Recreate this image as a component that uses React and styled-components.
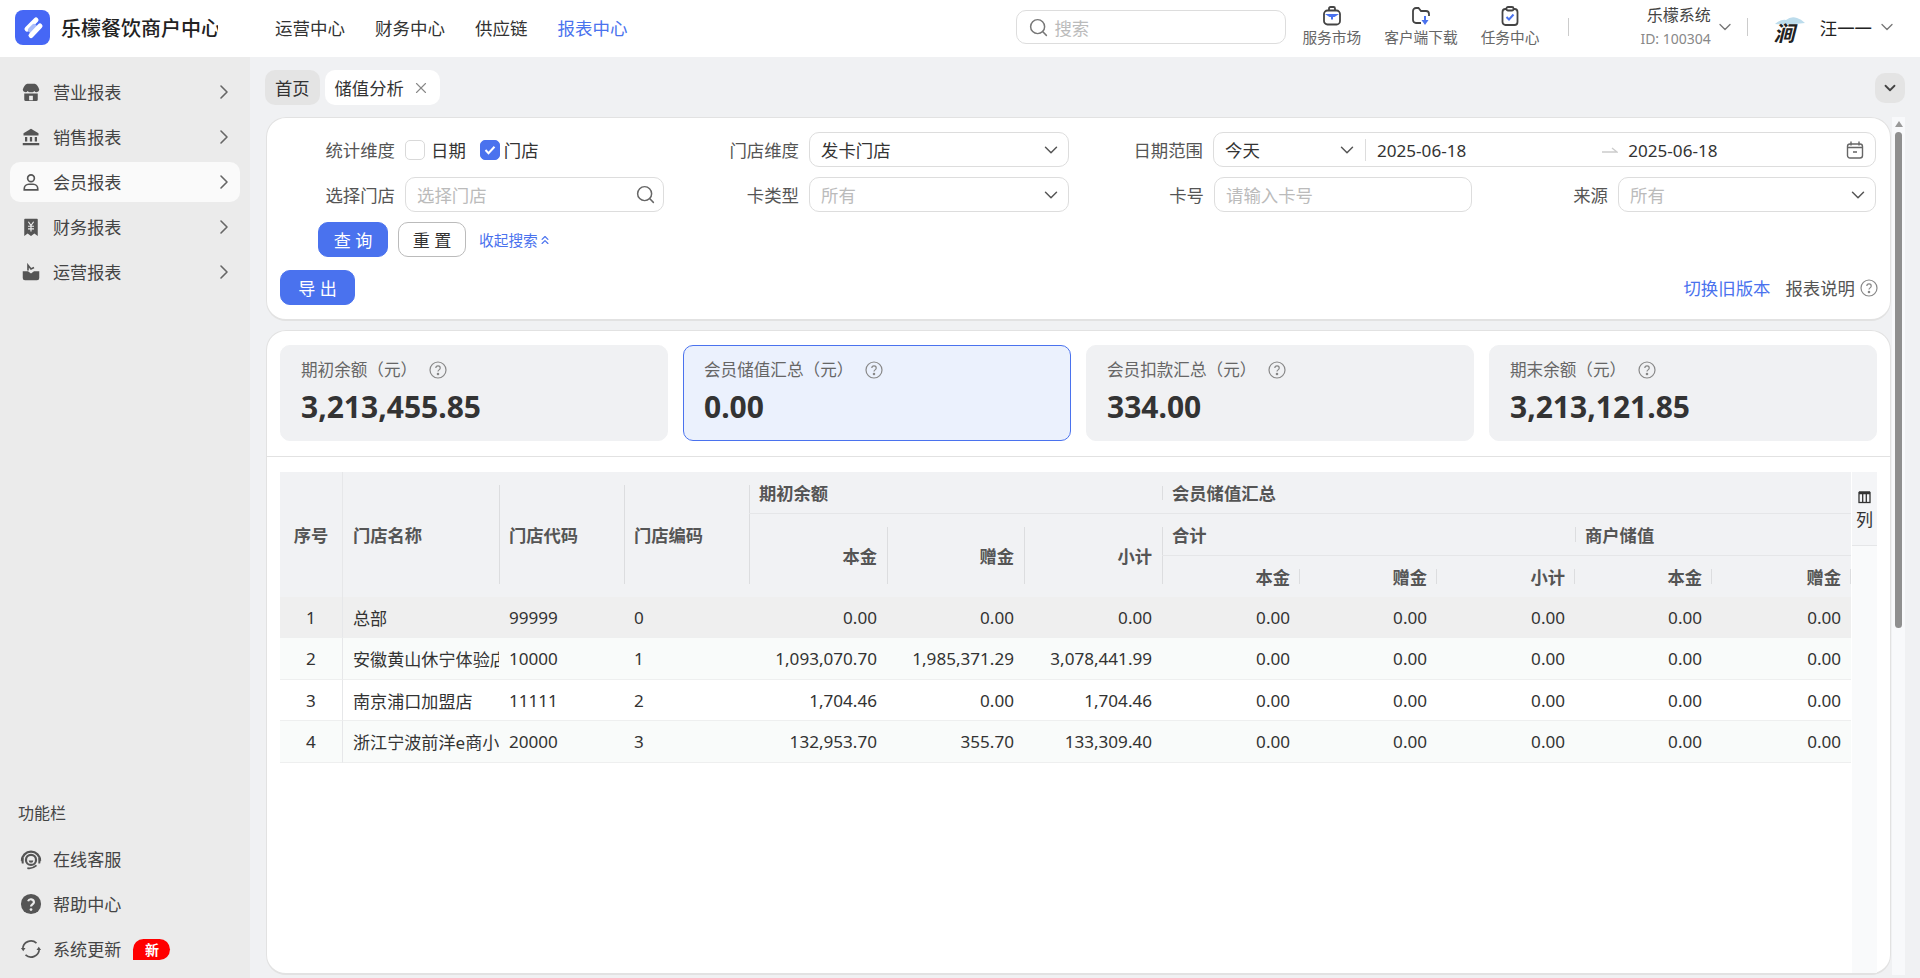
import React from 'react';
import styled, { createGlobalStyle } from 'styled-components';
import { ChevronDown, ChevronRight, ChevronsUp, Search, X } from 'lucide-react';

const BLUE = '#4a72ee';
const FONT = '"Noto Sans", "Noto Sans CJK SC", sans-serif';

const GlobalStyle = createGlobalStyle`
  html, body {
    margin: 0;
    height: 100%;
    overflow: hidden;
    font-family: ${FONT};
    color: #333;
    background: #f0f1f3;
  }
  * { box-sizing: border-box; }
`;

const Shell = styled.div`
  height: 100vh;
  display: flex;
  flex-direction: column;
`;

const TopBar = styled.header`
  height: 57px;
  flex: none;
  display: flex;
  align-items: center;
  padding: 0 23px 3px 15px;
  background: #fff;
`;

const LogoBox = styled.div`
  width: 35px;
  height: 35px;
  flex: none;
  display: flex;
  border-radius: 8px;
  background: #4667f5;
`;

const BrandName = styled.div`
  width: 157px;
  margin-right: 2px;
  margin-left: 11px;
  overflow: hidden;
  white-space: nowrap;
  font-size: 20px;
  font-weight: 500;
  color: #222;
`;

const Nav = styled.nav`
  display: flex;
  gap: 30px;
  margin-left: 55px;
`;

const NavItem = styled.a`
  font-size: 17.5px;
  color: ${p => (p.$active ? BLUE : '#333')};
`;

const SearchBox = styled.div`
  width: 270px;
  height: 34px;
  margin-left: auto;
  display: flex;
  align-items: center;
  gap: 5px;
  padding-left: 11px;
  border: 1px solid #ddd;
  border-radius: 10px;
  font-size: 17.4px;
  color: #bbb;
  svg { color: #777; }
`;

const Tools = styled.div`
  display: flex;
  gap: 23px;
  margin: 0 0 2px 16px;
`;

const Tool = styled.div`
  display: flex;
  flex-direction: column;
  align-items: center;
  gap: 1px;
  font-size: 14.7px;
  line-height: 20px;
  color: #666;
  svg { display: block; }
`;

const BarDivider = styled.span`
  width: 1px;
  height: 18px;
  flex: none;
  margin: ${p => p.$margin};
  background: #ccc;
`;

const Account = styled.div`
  display: flex;
  flex-direction: column;
  align-items: flex-end;
  gap: 4px;
  margin-right: 4px;
`;

const AccountName = styled.div`
  font-size: 16px;
  line-height: 20px;
  color: #444;
`;

const AccountId = styled.div`
  font-size: 14px;
  line-height: 20px;
  color: #888;
`;

const Avatar = styled.div`
  position: relative;
  width: 38px;
  height: 38px;
  flex: none;
  overflow: hidden;
  border-radius: 10px;
  background: #fff;
  svg { position: absolute; left: 0; top: 0; }
`;

const AvatarGlyph = styled.span`
  position: absolute;
  left: 5px;
  top: 14px;
  font-size: 21px;
  line-height: 22px;
  font-weight: 700;
  font-style: italic;
  color: #222;
`;

const UserName = styled.div`
  margin: 0 5px 0 13px;
  font-size: 17.4px;
  color: #222;
`;

const Body = styled.div`
  flex: 1;
  min-height: 0;
  display: flex;
`;

const Sidebar = styled.aside`
  width: 250px;
  flex: none;
  display: flex;
  flex-direction: column;
  justify-content: space-between;
  padding: 15px 10px 9px;
  background: #ebebeb;
`;

const Menu = styled.div`
  display: flex;
  flex-direction: column;
  gap: 5px;
`;

const MenuItem = styled.div`
  height: 40px;
  display: flex;
  align-items: center;
  gap: 13px;
  padding: 0 12px;
  border-radius: 10px;
  font-size: 17.1px;
  color: #444;
  background: ${p => (p.$active ? '#fafafa' : 'transparent')};
  svg { flex: none; }
`;

const MenuText = styled.span`
  margin-top: -2px;
`;

const WideIcon = styled.span`
  display: flex;
  margin: 0 -2px;
`;

const MenuArrow = styled(ChevronRight)`
  margin-left: auto;
  margin-right: -8px;
  color: #666;
`;

const SideTitle = styled.div`
  padding-left: 8px;
  margin-bottom: 6px;
  font-size: 16px;
  line-height: 30px;
  color: #444;
`;

const NewBadge = styled.span`
  margin-left: -1px;
  width: 37px;
  height: 21px;
  display: flex;
  align-items: center;
  justify-content: center;
  border-radius: 11px 11px 11px 0;
  background: #f00;
  font-size: 14px;
  font-weight: 700;
  color: #fff;
`;

const Main = styled.main`
  flex: 1;
  min-width: 0;
  display: flex;
  flex-direction: column;
  padding: 13px 15px 3px 16px;
`;

const TabsRow = styled.div`
  height: 35px;
  flex: none;
  display: flex;
  gap: 5px;
  margin: 0 0 12px -1px;
`;

const Tab = styled.div`
  height: 35px;
  display: flex;
  align-items: center;
  gap: 8px;
  padding: 0 10px;
  border-radius: 10px;
  font-size: 17.3px;
  color: #333;
  background: ${p => (p.$active ? '#fff' : '#e4e4e4')};
  svg { color: #888; }
`;

const CollapseButton = styled.div`
  width: 30px;
  height: 30px;
  margin: 3px 0 0 auto;
  display: flex;
  align-items: center;
  justify-content: center;
  border-radius: 10px;
  background: #e4e4e4;
  color: #444;
`;

const ScrollArea = styled.div`
  flex: 1;
  min-height: 0;
  display: flex;
  gap: 1px;
`;

const Content = styled.div`
  flex: 1;
  min-width: 0;
  display: flex;
  flex-direction: column;
  gap: 9px;
`;

const Scrollbar = styled.div`
  position: relative;
  width: 13px;
  flex: none;
  background: #f8f9fb;
`;

const ScrollArrow = styled.span`
  position: absolute;
  left: 3px;
  top: 4px;
  border-left: 4px solid transparent;
  border-right: 4px solid transparent;
  border-bottom: 6px solid #999;
`;

const ScrollThumb = styled.span`
  position: absolute;
  left: 3px;
  top: 15px;
  width: 7px;
  height: 496px;
  border-radius: 4px;
  background: #8f8f8f;
`;

const Card = styled.section`
  flex: ${p => (p.$grow ? 1 : 'none')};
  min-height: 0;
  display: flex;
  flex-direction: column;
  border: 1px solid #e2e2e2;
  border-bottom-width: 2px;
  border-radius: 20px;
  background: #fff;
`;

const FilterCard = styled(Card)`
  height: 204px;
  padding-top: 14px;
`;

const FilterGrid = styled.div`
  display: grid;
  grid-template-columns: 397px 405px 403px 404px;
  grid-auto-rows: 35px;
  row-gap: 10px;
`;

const FilterItem = styled.div`
  display: grid;
  grid-template-columns: 1fr ${p => p.$field || '259px'};
  grid-column: span ${p => p.$span || 1};
  column-gap: 10px;
  align-items: center;
`;

const Label = styled.label`
  text-align: right;
  font-size: 17.4px;
  color: #555;
`;

const CheckGroup = styled.div`
  display: flex;
  align-items: center;
  font-size: 17.4px;
`;

const CheckBox = styled.span`
  width: 20px;
  height: 20px;
  display: flex;
  align-items: center;
  justify-content: center;
  margin: ${p => (p.$checked ? '0 4px 0 14px' : '0 6px 0 0')};
  border: 1px solid ${p => (p.$checked ? BLUE : '#d9d9d9')};
  border-radius: 5px;
  background: ${p => (p.$checked ? BLUE : '#fff')};
`;

const Field = styled.div`
  height: 35px;
  display: flex;
  align-items: center;
  padding: 0 11px;
  border: 1px solid #ddd;
  border-radius: 10px;
  font-size: 17.4px;
  color: ${p => (p.$muted ? '#bbb' : '#333')};
  background: #fff;
`;

const FieldArrow = styled(ChevronDown)`
  margin-left: auto;
  margin-right: -5px;
  color: #555;
  flex: none;
`;

const FieldSearch = styled(Search)`
  margin-right: -4px;
  flex: none;
  color: #666;
`;

const TextInput = styled.input`
  flex: 1;
  min-width: 0;
  padding: 0;
  border: 0;
  outline: 0;
  font: inherit;
  background: transparent;
  &::placeholder { color: #bbb; opacity: 1; }
`;

const RangeMode = styled.div`
  width: 141px;
  flex: none;
  display: flex;
  align-items: center;
  padding-right: 12px;
  margin-right: 11px;
  border-right: 1px solid #ddd;
  line-height: 20px;
`;

const DateText = styled.span`
  padding-top: 2px;
  font-size: 17.1px;
  color: #333;
`;

const RangeArrow = styled.svg`
  margin: 0 10px 0 136px;
  flex: none;
`;

const ActionRow = styled.div`
  display: flex;
  align-items: center;
  gap: 10px;
  margin-top: 10px;
  padding-left: 51px;
`;

const Button = styled.button`
  width: ${p => p.$width};
  height: 35px;
  padding: 0;
  border: 1px solid ${p => (p.$primary ? BLUE : '#bbb')};
  border-radius: 10px;
  font-family: inherit;
  font-size: 17.1px;
  white-space: pre;
  color: ${p => (p.$primary ? '#fff' : '#333')};
  background: ${p => (p.$primary ? BLUE : '#fff')};
`;

const FoldLink = styled.a`
  display: flex;
  align-items: center;
  margin-left: 3px;
  font-size: 14.7px;
  color: ${BLUE};
`;

const ExportRow = styled.div`
  display: flex;
  align-items: center;
  justify-content: space-between;
  margin-top: 13px;
  padding: 0 12px 0 13px;
`;

const ExportLinks = styled.div`
  display: flex;
  align-items: center;
  font-size: 17.4px;
  line-height: 24px;
  color: #555;
  svg { margin-left: 5px; }
`;

const SwitchLink = styled.a`
  margin-right: 15px;
  color: ${BLUE};
`;

const StatRow = styled.div`
  display: grid;
  grid-template-columns: repeat(4, 1fr);
  gap: 15px;
  padding: 14px 13px 15px;
  border-bottom: 1px solid #e2e2e2;
`;

const Stat = styled.div`
  height: 96px;
  padding: 12px 20px;
  border: 1px solid ${p => (p.$active ? BLUE : '#f0f1f3')};
  border-radius: 10px;
  background: ${p => (p.$active ? '#ebf1fd' : '#f0f1f3')};
`;

const StatLabel = styled.div`
  display: flex;
  align-items: center;
  gap: 12px;
  font-size: 16.6px;
  line-height: 24px;
  color: #666;
`;

const StatValue = styled.div`
  margin-top: 6px;
  font-size: 30px;
  line-height: 38px;
  font-weight: 700;
  color: #333;
`;

const TableZone = styled.div`
  flex: 1;
  min-height: 0;
  display: flex;
  gap: 1px;
  padding: 15px 13px 0;
`;

const Table = styled.table`
  width: 1571px;
  height: fit-content;
  flex: none;
  table-layout: fixed;
  border-collapse: separate;
  border-spacing: 0;
`;

const HeadRow = styled.tr`
  height: ${p => p.$height};
`;

const Th = styled.th`
  position: relative;
  padding: 0 10px;
  overflow: hidden;
  white-space: nowrap;
  text-align: ${p => p.$align || 'left'};
  font-size: 17.3px;
  font-weight: 700;
  color: #555;
  background: #f1f2f4;
  border-bottom: ${p => (p.$rule ? '1px solid #e5e6e8' : '0')};
  border-right: ${p => (p.$edge ? '1px solid #e6e7e9' : '0')};
  &::before {
    content: ${p => (p.$lineTop === undefined ? 'none' : '""')};
    position: absolute;
    left: 0;
    top: ${p => p.$lineTop}px;
    bottom: ${p => p.$lineBottom}px;
    width: 1px;
    background: #dcdddf;
  }
  &::after {
    content: ${p => (p.$tick ? '""' : 'none')};
    position: absolute;
    right: 0;
    top: 13px;
    bottom: 13px;
    width: 1px;
    background: #dcdddf;
  }
`;

const Row = styled.tr`
  height: ${p => (p.$index % 2 === 0 ? '41px' : '42px')};
  background: ${p => (p.$index === 0 ? '#efefef' : p.$index % 2 === 1 ? '#f9fbfa' : '#fff')};
`;

const Td = styled.td`
  padding: 0 10px;
  overflow: hidden;
  white-space: nowrap;
  text-align: ${p => p.$align || 'left'};
  font-size: 17.1px;
  color: #333;
  border-bottom: 1px solid #eeefef;
  border-right: ${p => (p.$edge ? '1px solid #e6e7e9' : '0')};
`;

const ColumnPanel = styled.div`
  width: 25px;
  flex: none;
  background: #f9fafb;
`;

const ColumnToggle = styled.div`
  height: 74px;
  display: flex;
  flex-direction: column;
  align-items: center;
  gap: 4px;
  padding-top: 19px;
  border-bottom: 1px solid #e5e6e8;
  font-size: 17px;
  line-height: 24px;
  background: #f4f5f7;
`;

const Glyph = ({ children, size = 18, ...rest }) => (
  <svg width={size} height={size} viewBox="0 0 24 24" fill="#555" {...rest}>{children}</svg>
);

const StoreIcon = () => (
  <Glyph>
    <path d="M7 1h10c3 1 5 4 6 8a3.600 3.600 0 0 1-6.600 1.600A4 4 0 0 1 12 12a4 4 0 0 1-4.400-1.400A3.600 3.600 0 0 1 1 9c1-4 3-7 6-8z" />
    <path fillRule="evenodd" d="M3 14h18v8a2 2 0 0 1-2 2H5a2 2 0 0 1-2-2zm6.500 3v6h5v-6z" />
  </Glyph>
);

const BankIcon = () => (
  <Glyph>
    <path d="M12 1 2 7v3h20V7z" />
    <path d="M4 12h3v6H4zM10.500 12h3v6h-3zM17 12h3v6h-3zM1 20h22v3H1z" />
  </Glyph>
);

const UserIcon = () => (
  <Glyph fill="none" stroke="#555" strokeWidth="2.200">
    <circle cx="12" cy="7" r="4.500" />
    <path d="M3 22.500v-1.500a6 6 0 0 1 6-6h6a6 6 0 0 1 6 6v1.500z" />
  </Glyph>
);

const ReceiptIcon = () => (
  <Glyph>
    <path d="M4 1h16a1 1 0 0 1 1 1v22l-4.500-3.500L12 24l-4.500-3.500L3 24V2a1 1 0 0 1 1-1z" />
    <path d="M8.500 5l3.500 5 3.500-5M8 11h8M8 14.500h8M12 10v8" fill="none" stroke="#ebebeb" strokeWidth="1.600" />
  </Glyph>
);

const OperateIcon = () => (
  <Glyph>
    <path d="M1 11h7l4 3 4-3h7v9a3 3 0 0 1-3 3H4a3 3 0 0 1-3-3z" />
    <path d="M8 10V3l4 5 4-2" fill="none" stroke="#555" strokeWidth="2.200" />
  </Glyph>
);

const HeadsetIcon = () => (
  <Glyph size={22}>
    <path d="M2 14a10 10 0 0 1 20 0" fill="none" stroke="#555" strokeWidth="2.400" />
    <path d="M1 11h3v6H2zM23 11h-3v6h2z" />
    <circle cx="12" cy="13" r="5.500" fill="none" stroke="#555" strokeWidth="2.400" />
    <path d="M9.500 13.500a2.500 2.500 0 0 0 5 0z" />
    <path d="M8 22a12 12 0 0 0 10-3" fill="none" stroke="#555" strokeWidth="2" />
  </Glyph>
);

const HelpFilledIcon = () => (
  <Glyph size={22}>
    <circle cx="12" cy="12" r="11" />
    <path d="M8.800 9a3.300 3.300 0 0 1 6.400 1c0 2.200-3.200 2.600-3.200 4.600" fill="none" stroke="#ebebeb" strokeWidth="2.400" />
    <circle cx="12" cy="18" r="1.500" fill="#ebebeb" />
  </Glyph>
);

const RefreshIcon = () => (
  <Glyph size={22} fill="none" stroke="#555" strokeWidth="1.800">
    <path d="M3 12a9 9 0 0 1 15-6.500" />
    <path d="M21 12a9 9 0 0 1-15 6.500" />
    <path d="M1 11h5l-2.500 3.500zM23 13h-5l2.500-3.500z" fill="#555" stroke="none" />
  </Glyph>
);

const BriefcaseIcon = () => (
  <svg width="18" height="20" viewBox="0 0 18 20" fill="none" stroke="#444" strokeWidth="1.800">
    <path d="M6 4V2.500A1.500 1.500 0 0 1 7.500 1h3A1.500 1.500 0 0 1 12 2.500V4" />
    <rect x="1" y="4.500" width="16" height="14" rx="3.500" />
    <path d="M2 8h14l-4.500 3h-5zM8 11h2v2.500H8z" fill={BLUE} stroke="none" />
  </svg>
);

const FolderIcon = () => (
  <svg width="18" height="20" viewBox="0 0 18 20" fill="none">
    <path d="M9 17H4a3 3 0 0 1-3-3V5a3 3 0 0 1 3-3h2.500l2.500 3h5a3 3 0 0 1 3 3v2" stroke="#444" strokeWidth="1.800" />
    <path d="M13 10v5" stroke={BLUE} strokeWidth="2" />
    <path d="M9.500 14h7L13 19z" fill={BLUE} />
  </svg>
);

const ClipboardIcon = () => (
  <svg width="18" height="20" viewBox="0 0 18 20" fill="none" stroke="#444" strokeWidth="1.800">
    <rect x="1.500" y="3" width="15" height="16" rx="3" />
    <rect x="5.500" y="1" width="7" height="3.500" rx="1.500" fill="#fff" />
    <path d="M5.500 11l2.500 2.500 4.500-5" stroke={BLUE} strokeWidth="2" />
  </svg>
);

const LogoMark = () => (
  <svg width="35" height="35" viewBox="0 0 35 35" fill="none" strokeLinecap="round">
    <path d="M21 10 12 19" stroke="#fff" strokeWidth="5" />
    <path d="M19 17 16 20" stroke="#a9bcfb" strokeWidth="6" />
    <path d="M25 16 16 25.500" stroke="#fff" strokeWidth="5" />
  </svg>
);

const HelpIcon = ({ size = 18 }) => (
  <svg width={size} height={size} viewBox="0 0 18 18" fill="none" stroke="#888" strokeWidth="1.200">
    <circle cx="9" cy="9" r="8" />
    <path d="M6.800 7a2.200 2.200 0 0 1 4.400.3c0 1.500-2.200 1.700-2.200 3.200" />
    <circle cx="9" cy="13" r=".7" fill="#888" />
  </svg>
);

const CalendarIcon = () => (
  <svg width="18" height="18" viewBox="0 0 18 18" fill="none" stroke="#666" strokeWidth="1.400" style={{ marginLeft: 'auto', flex: 'none' }}>
    <rect x="1.500" y="3" width="15" height="14" rx="2.500" />
    <path d="M5 .5v4M13 .5v4M1.500 6.500h15M7 11h4" />
  </svg>
);

const ColumnsIcon = () => (
  <svg width="13" height="13" viewBox="0 0 13 13" fill="none" stroke="#333" strokeWidth="1.300">
    <rect x="1" y="1.500" width="11" height="10" />
    <path d="M1 2.500h11M4.700 2v9M8.300 2v9" />
    <path d="M1 1.500h11" strokeWidth="2.400" />
  </svg>
);

const menuItems = [
  { label: '营业报表', icon: <StoreIcon /> },
  { label: '销售报表', icon: <BankIcon /> },
  { label: '会员报表', icon: <UserIcon />, active: true },
  { label: '财务报表', icon: <ReceiptIcon /> },
  { label: '运营报表', icon: <OperateIcon /> },
];

const stats = [
  { label: '期初余额（元）', value: '3,213,455.85' },
  { label: '会员储值汇总（元）', value: '0.00', active: true },
  { label: '会员扣款汇总（元）', value: '334.00' },
  { label: '期末余额（元）', value: '3,213,121.85' },
];

const columnWidths = [63, 156, 125, 125, 138, 137, 138, 138, 137, 138, 137, 139];

const rows = [
  ['1', '总部', '99999', '0', '0.00', '0.00', '0.00'],
  ['2', '安徽黄山休宁体验店', '10000', '1', '1,093,070.70', '1,985,371.29', '3,078,441.99'],
  ['3', '南京浦口加盟店', '11111', '2', '1,704.46', '0.00', '1,704.46'],
  ['4', '浙江宁波前洋e商小店', '20000', '3', '132,953.70', '355.70', '133,309.40'],
];

export default function App() {
  return (
    <Shell>
      <GlobalStyle />
      <TopBar>
        <LogoBox><LogoMark /></LogoBox>
        <BrandName>乐檬餐饮商户中心</BrandName>
        <Nav>
          <NavItem>运营中心</NavItem>
          <NavItem>财务中心</NavItem>
          <NavItem>供应链</NavItem>
          <NavItem $active>报表中心</NavItem>
        </Nav>
        <SearchBox><Search size={21} strokeWidth={1.7} />搜索</SearchBox>
        <Tools>
          <Tool><BriefcaseIcon />服务市场</Tool>
          <Tool><FolderIcon />客户端下载</Tool>
          <Tool><ClipboardIcon />任务中心</Tool>
        </Tools>
        <BarDivider $margin="0 71px 0 29px" />
        <Account>
          <AccountName>乐檬系统</AccountName>
          <AccountId>ID: 100304</AccountId>
        </Account>
        <ChevronDown size={20} strokeWidth={1.6} color="#777" />
        <BarDivider $margin="0 21px 0 12px" />
        <Avatar>
          <svg width="38" height="38" viewBox="0 0 38 38">
            <path d="M6 16q6-5 11-4 5-4 11-2 4 1 8 5-14 2-30 1z" fill="#bcdcec" />
          </svg>
          <AvatarGlyph>涧</AvatarGlyph>
        </Avatar>
        <UserName>汪一一</UserName>
        <ChevronDown size={20} strokeWidth={1.6} color="#777" />
      </TopBar>
      <Body>
        <Sidebar>
          <Menu>
            {menuItems.map(item => (
              <MenuItem key={item.label} $active={item.active}>
                {item.icon}
                <MenuText>{item.label}</MenuText>
                <MenuArrow size={24} strokeWidth={1.6} />
              </MenuItem>
            ))}
          </Menu>
          <Menu>
            <SideTitle>功能栏</SideTitle>
            <MenuItem><WideIcon><HeadsetIcon /></WideIcon><MenuText>在线客服</MenuText></MenuItem>
            <MenuItem><WideIcon><HelpFilledIcon /></WideIcon><MenuText>帮助中心</MenuText></MenuItem>
            <MenuItem><WideIcon><RefreshIcon /></WideIcon><MenuText>系统更新</MenuText><NewBadge>新</NewBadge></MenuItem>
          </Menu>
        </Sidebar>
        <Main>
          <TabsRow>
            <Tab>首页</Tab>
            <Tab $active>储值分析<X size={18} strokeWidth={1.5} /></Tab>
            <CollapseButton><ChevronDown size={18} strokeWidth={2.4} /></CollapseButton>
          </TabsRow>
          <ScrollArea>
            <Content>
              <FilterCard>
                <FilterGrid>
                  <FilterItem>
                    <Label>统计维度</Label>
                    <CheckGroup>
                      <CheckBox />日期
                      <CheckBox $checked>
                        <svg width="14" height="14" viewBox="0 0 14 14" fill="none" stroke="#fff" strokeWidth="2"><path d="M2.500 7l3 3.200 6-6.500" /></svg>
                      </CheckBox>门店
                    </CheckGroup>
                  </FilterItem>
                  <FilterItem $field="260px">
                    <Label>门店维度</Label>
                    <Field>发卡门店<FieldArrow size={22} strokeWidth={1.6} /></Field>
                  </FilterItem>
                  <FilterItem $span={2} $field="663px">
                    <Label>日期范围</Label>
                    <Field>
                      <RangeMode>今天<FieldArrow size={22} strokeWidth={1.6} /></RangeMode>
                      <DateText>2025-06-18</DateText>
                      <RangeArrow width="16" height="10" viewBox="0 0 16 10" fill="none" stroke="#ccc" strokeWidth="1.400">
                        <path d="M0 7h15L10 3" />
                      </RangeArrow>
                      <DateText>2025-06-18</DateText>
                      <CalendarIcon />
                    </Field>
                  </FilterItem>
                  <FilterItem>
                    <Label>选择门店</Label>
                    <Field>
                      <TextInput placeholder="选择门店" />
                      <FieldSearch size={21} strokeWidth={1.7} />
                    </Field>
                  </FilterItem>
                  <FilterItem $field="260px">
                    <Label>卡类型</Label>
                    <Field $muted>所有<FieldArrow size={22} strokeWidth={1.6} /></Field>
                  </FilterItem>
                  <FilterItem $field="258px">
                    <Label>卡号</Label>
                    <Field><TextInput placeholder="请输入卡号" /></Field>
                  </FilterItem>
                  <FilterItem $field="258px">
                    <Label>来源</Label>
                    <Field $muted>所有<FieldArrow size={22} strokeWidth={1.6} /></Field>
                  </FilterItem>
                </FilterGrid>
                <ActionRow>
                  <Button $primary $width="70px">查 询</Button>
                  <Button $width="68px">重 置</Button>
                  <FoldLink>收起搜索<ChevronsUp size={14} /></FoldLink>
                </ActionRow>
                <ExportRow>
                  <Button $primary $width="75px">导 出</Button>
                  <ExportLinks>
                    <SwitchLink>切换旧版本</SwitchLink>
                    报表说明
                    <HelpIcon />
                  </ExportLinks>
                </ExportRow>
              </FilterCard>
              <Card $grow>
                <StatRow>
                  {stats.map(stat => (
                    <Stat key={stat.label} $active={stat.active}>
                      <StatLabel>{stat.label}<HelpIcon /></StatLabel>
                      <StatValue>{stat.value}</StatValue>
                    </Stat>
                  ))}
                </StatRow>
                <TableZone>
                  <Table>
                    <colgroup>
                      {columnWidths.map((w, i) => <col key={i} width={w} />)}
                    </colgroup>
                    <thead>
                      <HeadRow $height="42px">
                        <Th rowSpan={3} $align="center" $edge>序号</Th>
                        <Th rowSpan={3}>门店名称</Th>
                        <Th rowSpan={3} $lineTop={13} $lineBottom={13}>门店代码</Th>
                        <Th rowSpan={3} $lineTop={13} $lineBottom={13}>门店编码</Th>
                        <Th colSpan={3} $rule $lineTop={13} $lineBottom={0}>期初余额</Th>
                        <Th colSpan={5} $rule $lineTop={14} $lineBottom={13}>会员储值汇总</Th>
                      </HeadRow>
                      <HeadRow $height="42px">
                        <Th rowSpan={2} $align="right" $lineTop={0} $lineBottom={13}>本金</Th>
                        <Th rowSpan={2} $align="right" $lineTop={13} $lineBottom={13}>赠金</Th>
                        <Th rowSpan={2} $align="right" $lineTop={13} $lineBottom={13}>小计</Th>
                        <Th colSpan={3} $rule $lineTop={13} $lineBottom={0}>合计</Th>
                        <Th colSpan={2} $rule $lineTop={13} $lineBottom={13}>商户储值</Th>
                      </HeadRow>
                      <HeadRow $height="41px">
                        <Th $align="right" $tick $lineTop={0} $lineBottom={13}>本金</Th>
                        <Th $align="right" $tick>赠金</Th>
                        <Th $align="right" $tick>小计</Th>
                        <Th $align="right" $tick>本金</Th>
                        <Th $align="right" $tick>赠金</Th>
                      </HeadRow>
                    </thead>
                    <tbody>
                      {rows.map((row, index) => (
                        <Row key={row[0]} $index={index}>
                          <Td $align="center" $edge>{row[0]}</Td>
                          <Td>{row[1]}</Td>
                          <Td>{row[2]}</Td>
                          <Td>{row[3]}</Td>
                          {row.slice(4).map((cell, i) => <Td key={i} $align="right">{cell}</Td>)}
                          {[0, 1, 2, 3, 4].map(i => <Td key={`m${i}`} $align="right">0.00</Td>)}
                        </Row>
                      ))}
                    </tbody>
                  </Table>
                  <ColumnPanel>
                    <ColumnToggle><ColumnsIcon />列</ColumnToggle>
                  </ColumnPanel>
                </TableZone>
              </Card>
            </Content>
            <Scrollbar>
              <ScrollArrow />
              <ScrollThumb />
            </Scrollbar>
          </ScrollArea>
        </Main>
      </Body>
    </Shell>
  );
}
